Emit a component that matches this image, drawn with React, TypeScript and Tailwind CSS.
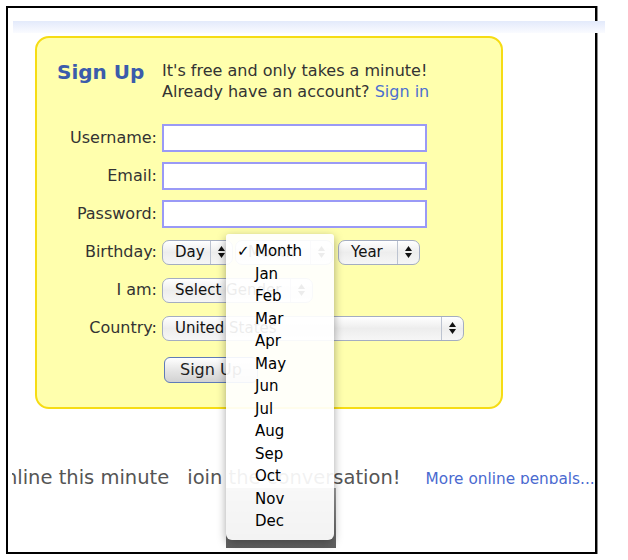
import React from 'react';

const months = ['Month', 'Jan', 'Feb', 'Mar', 'Apr', 'May', 'Jun', 'Jul', 'Aug', 'Sep', 'Oct', 'Nov', 'Dec'];

function Arrows() {
  return (
    <svg width="7" height="12" viewBox="0 0 7 12" className="block">
      <polygon points="0,5 3.5,0 7,5" fill="#111" />
      <polygon points="0,7 7,7 3.5,12" fill="#111" />
    </svg>
  );
}

function Select({ label, className }: { label: string; className: string }) {
  return (
    <div
      className={`flex h-[25px] items-stretch rounded-[7px] border border-[#a4adc1] bg-linear-to-b from-[#ffffff] via-[#ededed] to-[#f6f6f6] shadow-[inset_0_1px_0_#fff] ${className}`}
    >
      <span className="flex-1 truncate pl-[12px] text-[15px] leading-[23px] text-[#111]">{label}</span>
      <span className="flex w-[22px] items-center justify-center border-l border-[#bcc3d0]">
        <Arrows />
      </span>
    </div>
  );
}

function Row({ label, children }: { label: string; children: React.ReactNode }) {
  return (
    <div className="flex h-[38px] items-center">
      <div className="w-[120px] text-right text-[16px] text-[#333]">{label}</div>
      <div className="ml-[5px] flex items-center">{children}</div>
    </div>
  );
}

function TextInput() {
  return <div className="h-[28px] w-[265px] border-2 border-[#9a9af6] bg-white" />;
}

export default function App() {
  return (
    <div className="relative h-[560px] w-[628px] overflow-hidden bg-white font-['DejaVu_Sans',sans-serif]">
      <div className="ml-[6px] mt-[6px] h-[548px] w-[591px] border-2 border-black shadow-[1px_0_0_#8a8a8a]">
        {/* top band */}
        <div className="ml-[5px] mt-[13px] h-[12px] w-[592px] bg-linear-to-b from-[#e3eafb] to-[#fafbff]" />

        {/* sign up box */}
        <div className="ml-[27px] mt-[3px] h-[373px] w-[468px] rounded-[14px] border-2 border-[#f6dc14] bg-[#ffffad] pt-[22px]">
          <div className="flex items-start">
            <div className="w-[120px] pl-[20px] text-[20px] font-bold leading-[24px] text-[#3b5cab]">Sign Up</div>
            <div className="ml-[5px] text-[16px] leading-[21px] text-[#333]">
              <div>It's free and only takes a minute!</div>
              <div>
                Already have an account? <span className="text-[#4b6fd0]">Sign in</span>
              </div>
            </div>
          </div>

          <div className="mt-[17px]">
            <Row label="Username:">
              <TextInput />
            </Row>
            <Row label="Email:">
              <TextInput />
            </Row>
            <Row label="Password:">
              <TextInput />
            </Row>
            <Row label="Birthday:">
              <Select label="Day" className="w-[71px]" />
              <Select label="Month" className="ml-[2px] w-[98px]" />
              <Select label="Year" className="ml-[5px] w-[82px]" />
            </Row>
            <Row label="I am:">
              <Select label="Select Gender" className="w-[151px]" />
            </Row>
            <Row label="Country:">
              <Select label="United States" className="w-[302px]" />
            </Row>
          </div>

          <div className="mt-[10px] flex pl-[127px]">
            <button className="h-[26px] rounded-[6px] border border-[#5f7bb8] bg-linear-to-b from-[#ffffff] via-[#e6e6e6] to-[#d2d2d2] px-[15px] text-[16px] leading-[22px] text-[#222]">
              Sign Up
            </button>
          </div>
        </div>

        {/* bottom line, cropped */}
        <div className="ml-[4px] mt-[53px] h-[22px] w-[583px] overflow-hidden pt-[4px]">
          <div className="flex items-baseline whitespace-nowrap leading-[24px]">
            <span className="ml-[-19px] text-[19.5px] text-[#555]">online this minute</span>
            <span className="ml-[18px] text-[19.5px] text-[#555]">join the conversation!</span>
            <span className="ml-[25px] text-[15.3px] text-[#4a6ad0]">More online penpals...</span>
          </div>
        </div>
      </div>

      {/* grey block behind the open menu */}
      <div className="absolute left-[226px] top-[488px] h-[60px] w-[110px] bg-linear-to-b from-[#a2a2a2] to-[#5e5e5e]" />

      {/* open month menu */}
      <div className="absolute left-[226px] top-[234px] h-[306px] w-[108px] rounded-t-[3px] rounded-b-[6px] bg-white/[0.92] pt-[6px] shadow-[0_3px_10px_rgba(0,0,0,0.35)]">
        {months.map((m, i) => (
          <div key={m} className="relative pl-[29px] text-[15px] leading-[22.5px] text-black">
            {i === 0 && <span className="absolute left-[11px] top-0 font-bold">✓</span>}
            {m}
          </div>
        ))}
      </div>
    </div>
  );
}
